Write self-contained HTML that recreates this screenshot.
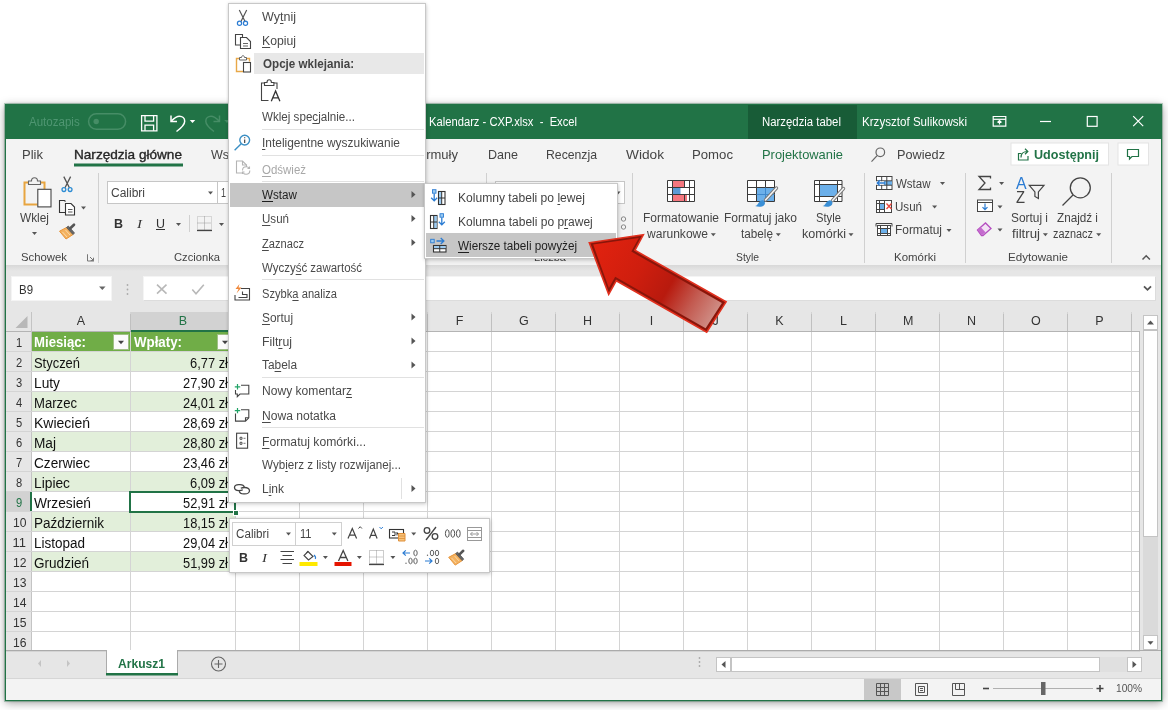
<!DOCTYPE html>
<html lang="pl"><head><meta charset="utf-8"><title>Kalendarz - CXP.xlsx - Excel</title>
<style>
*{box-sizing:border-box;margin:0;padding:0}
html,body{width:1168px;height:710px;overflow:hidden;background:#fff;font-family:"Liberation Sans",sans-serif}
.abs,.t,div,svg{position:absolute}
.t{white-space:nowrap;transform-origin:0 50%;display:inline-block}
.t u{text-decoration:underline;text-underline-offset:2px;text-decoration-thickness:1px}
#win{left:5px;top:104px;width:1157px;height:597px;background:#f3f3f3;border:1px solid #217346;box-shadow:0 0 0 1px rgba(33,115,70,.3),0 2px 9px rgba(0,0,0,.38),0 0 3px rgba(0,0,0,.2);overflow:hidden}
#root{will-change:transform;left:0;top:0;width:1168px;height:710px;overflow:hidden}
.sep{width:1px;background:#d2d2d2}
.wbox{background:#fff;border:1px solid #c6c6c6}
.menu{background:#fff;border:1px solid #c8c8c8;box-shadow:0 0 3px rgba(0,0,0,.13),1px 2px 4px rgba(0,0,0,.12)}
.msep{height:1px;background:#e1e1e1}
.gl{background:#d4d4d4}

</style></head>
<body>
<div id="root">
<div id="win"></div>
<div style="left:6px;top:105px;width:1155px;height:34px;background:#217346;"></div>
<div style="left:748px;top:105px;width:109px;height:34px;background:#185c37;"></div>
<div style="left:6px;top:139px;width:1155px;height:126px;background:#f3f3f3;"></div>
<div style="left:6px;top:265px;width:1155px;height:6px;background:linear-gradient(#d8d8d8,#e6e6e6);"></div>
<div style="left:6px;top:271px;width:1155px;height:41px;background:#e6e6e6;"></div>
<div style="left:11px;top:276px;width:101px;height:25px;background:#fff;border:1px solid #f4f4f4;"></div>
<div style="left:143px;top:276px;width:1013px;height:25px;background:#fff;border:1px solid #f4f4f4;border-bottom-color:#dcdcdc;border-right-color:#dcdcdc;"></div>
<div style="left:6px;top:312px;width:1155px;height:20px;background:#e6e6e6;"></div>
<div style="left:31px;top:332px;width:1109px;height:318px;background:#fff;"></div>
<div style="left:6px;top:332px;width:25px;height:318px;background:#e6e6e6;"></div>
<div style="left:1140px;top:312px;width:21px;height:338px;background:#e6e6e6;"></div>
<div style="left:6px;top:650px;width:1155px;height:28px;background:#e6e6e6;border-top:1px solid #ababab;"></div>
<div style="left:6px;top:678px;width:1155px;height:22px;background:#f3f3f3;border-top:1px solid #d6d6d6;"></div>
<div style="left:31px;top:332px;width:204px;height:20px;background:#70ad47;"></div>
<div style="left:31px;top:352px;width:204px;height:20px;background:#e2efda;"></div>
<div style="left:31px;top:392px;width:204px;height:20px;background:#e2efda;"></div>
<div style="left:31px;top:432px;width:204px;height:20px;background:#e2efda;"></div>
<div style="left:31px;top:472px;width:204px;height:20px;background:#e2efda;"></div>
<div style="left:31px;top:512px;width:204px;height:20px;background:#e2efda;"></div>
<div style="left:31px;top:552px;width:204px;height:20px;background:#e2efda;"></div>
<div style="left:31px;top:312px;width:1px;height:338px;background:#c4c4c4;"></div>
<div style="left:130px;top:312px;width:1px;height:338px;background:#d4d4d4;"></div>
<div style="left:235px;top:312px;width:1px;height:338px;background:#d4d4d4;"></div>
<div style="left:299px;top:312px;width:1px;height:338px;background:#d4d4d4;"></div>
<div style="left:363px;top:312px;width:1px;height:338px;background:#d4d4d4;"></div>
<div style="left:427px;top:312px;width:1px;height:338px;background:#d4d4d4;"></div>
<div style="left:491px;top:312px;width:1px;height:338px;background:#d4d4d4;"></div>
<div style="left:555px;top:312px;width:1px;height:338px;background:#d4d4d4;"></div>
<div style="left:619px;top:312px;width:1px;height:338px;background:#d4d4d4;"></div>
<div style="left:683px;top:312px;width:1px;height:338px;background:#d4d4d4;"></div>
<div style="left:747px;top:312px;width:1px;height:338px;background:#d4d4d4;"></div>
<div style="left:811px;top:312px;width:1px;height:338px;background:#d4d4d4;"></div>
<div style="left:875px;top:312px;width:1px;height:338px;background:#d4d4d4;"></div>
<div style="left:939px;top:312px;width:1px;height:338px;background:#d4d4d4;"></div>
<div style="left:1003px;top:312px;width:1px;height:338px;background:#d4d4d4;"></div>
<div style="left:1067px;top:312px;width:1px;height:338px;background:#d4d4d4;"></div>
<div style="left:1131px;top:312px;width:1px;height:338px;background:#d4d4d4;"></div>
<div style="left:130px;top:314px;width:1px;height:17px;background:#c0c0c0;"></div>
<div style="left:235px;top:314px;width:1px;height:17px;background:#c0c0c0;"></div>
<div style="left:299px;top:314px;width:1px;height:17px;background:#c0c0c0;"></div>
<div style="left:363px;top:314px;width:1px;height:17px;background:#c0c0c0;"></div>
<div style="left:427px;top:314px;width:1px;height:17px;background:#c0c0c0;"></div>
<div style="left:491px;top:314px;width:1px;height:17px;background:#c0c0c0;"></div>
<div style="left:555px;top:314px;width:1px;height:17px;background:#c0c0c0;"></div>
<div style="left:619px;top:314px;width:1px;height:17px;background:#c0c0c0;"></div>
<div style="left:683px;top:314px;width:1px;height:17px;background:#c0c0c0;"></div>
<div style="left:747px;top:314px;width:1px;height:17px;background:#c0c0c0;"></div>
<div style="left:811px;top:314px;width:1px;height:17px;background:#c0c0c0;"></div>
<div style="left:875px;top:314px;width:1px;height:17px;background:#c0c0c0;"></div>
<div style="left:939px;top:314px;width:1px;height:17px;background:#c0c0c0;"></div>
<div style="left:1003px;top:314px;width:1px;height:17px;background:#c0c0c0;"></div>
<div style="left:1067px;top:314px;width:1px;height:17px;background:#c0c0c0;"></div>
<div style="left:1131px;top:314px;width:1px;height:17px;background:#c0c0c0;"></div>
<div style="left:6px;top:331px;width:1134px;height:1px;background:#d4d4d4;"></div>
<div style="left:6px;top:351px;width:1134px;height:1px;background:#d4d4d4;"></div>
<div style="left:6px;top:371px;width:1134px;height:1px;background:#d4d4d4;"></div>
<div style="left:6px;top:391px;width:1134px;height:1px;background:#d4d4d4;"></div>
<div style="left:6px;top:411px;width:1134px;height:1px;background:#d4d4d4;"></div>
<div style="left:6px;top:431px;width:1134px;height:1px;background:#d4d4d4;"></div>
<div style="left:6px;top:451px;width:1134px;height:1px;background:#d4d4d4;"></div>
<div style="left:6px;top:471px;width:1134px;height:1px;background:#d4d4d4;"></div>
<div style="left:6px;top:491px;width:1134px;height:1px;background:#d4d4d4;"></div>
<div style="left:6px;top:511px;width:1134px;height:1px;background:#d4d4d4;"></div>
<div style="left:6px;top:531px;width:1134px;height:1px;background:#d4d4d4;"></div>
<div style="left:6px;top:551px;width:1134px;height:1px;background:#d4d4d4;"></div>
<div style="left:6px;top:571px;width:1134px;height:1px;background:#d4d4d4;"></div>
<div style="left:6px;top:591px;width:1134px;height:1px;background:#d4d4d4;"></div>
<div style="left:6px;top:611px;width:1134px;height:1px;background:#d4d4d4;"></div>
<div style="left:6px;top:631px;width:1134px;height:1px;background:#d4d4d4;"></div>
<div style="left:6px;top:651px;width:1134px;height:1px;background:#d4d4d4;"></div>
<div style="left:1139px;top:332px;width:1px;height:318px;background:#b8b8b8;"></div>
<div style="left:6px;top:331px;width:1134px;height:1px;background:#b4b4b4;"></div>
<div style="left:31px;top:312px;width:1px;height:20px;background:#c4c4c4;"></div>
<div style="left:131px;top:312px;width:104px;height:20px;background:#d2d2d2;border-bottom:2px solid #217346;"></div>
<div style="left:6px;top:492px;width:26px;height:19px;background:#d2d2d2;border-right:2px solid #217346;"></div>
<div style="left:129px;top:491px;width:107px;height:22px;background:transparent;border:2px solid #217346;"></div>
<div style="left:233px;top:510px;width:6px;height:6px;background:#217346;border:1px solid #fff;"></div>
<svg width="1168" height="710" viewBox="0 0 1168 710" style="left:0;top:0"><rect x="88.600" y="113.800" width="37" height="15.400" rx="7.700" fill="none" stroke="#468d66" stroke-width="1.500"/>
<circle cx="96.200" cy="121.500" r="2.700" fill="#468d66"/>
<g fill="none" stroke="#fff" stroke-width="1.3"><path d="M141.6 115.6h15.3v15.2h-15.3z"/><path d="M145 115.6v5.6h8.6v-5.6"/><path d="M145 130.8v-5.6h8.6v5.6"/></g>
<g fill="none" stroke="#fff" stroke-width="1.5"><path d="M176.5 131.5c4-3 8.2-6.5 8.2-10.3 0-3-2.4-4.9-5.2-4.9-3.2 0-5.6 2.2-8 4.6"/><path d="M171 115.6v5.9h6"/></g>
<path d="M189.75 120.0h5.5l-2.75 3z" fill="#fff"/>
<g fill="none" stroke="#468d66" stroke-width="1.500"><path d="M214 131.5c-4-3-8.2-6.500-8.2-10.300 0-3 2.400-4.900 5.200-4.900 3.200 0 5.600 2.200 8 4.600"/><path d="M219.5 115.600v5.900h-6"/></g>
<path d="M224.25 120.0h5.5l-2.75 3z" fill="#468d66"/>
<g fill="none" stroke="#fff" stroke-width="1.2"><path d="M993.200 116.500h12.600v9.600h-12.600z"/><path d="M993.200 119.300h12.600"/><path d="M999.500 124.500v-3.800m-2 1.800l2-2 2 2"/></g>
<path d="M1040 121.500h11" stroke="#fff" stroke-width="1.2"/>
<rect x="1087.300" y="116.500" width="9.800" height="9.800" fill="none" stroke="#fff" stroke-width="1.2"/>
<path d="M1133.200 116.200l10 10m0-10l-10 10" stroke="#fff" stroke-width="1.200" fill="none"/>
<rect x="74" y="163.500" width="109" height="3" fill="#217346"/>
<g fill="none" stroke="#666" stroke-width="1.200"><circle cx="880.300" cy="152.300" r="4.300"/><path d="M877.100 155.700l-5.600 6"/></g>
<rect x="1011" y="143" width="97.500" height="22" fill="#fff" stroke="#e4e4e4" stroke-width="1"/>
<g fill="none" stroke="#217346" stroke-width="1.200"><path d="M1021.500 153.500h-3v6.500h9.500v-4"/><path d="M1021 157.500c0-4 2.500-6 6.500-6m-2.500-2.700l2.800 2.700-2.800 2.700"/></g>
<rect x="1118" y="143" width="30.500" height="22" fill="#fff" stroke="#e4e4e4" stroke-width="1"/>
<path d="M1127.500 149.500h11v7h-6.500l-2.500 2.500v-2.500h-2z" fill="none" stroke="#217346" stroke-width="1.200"/>
<path d="M98.5 173v90" stroke="#d0d0d0" stroke-width="1"/>
<path d="M632.5 173v90" stroke="#d0d0d0" stroke-width="1"/>
<path d="M864.5 173v90" stroke="#d0d0d0" stroke-width="1"/>
<path d="M965.5 173v90" stroke="#d0d0d0" stroke-width="1"/>
<path d="M1111.5 173v90" stroke="#d0d0d0" stroke-width="1"/>
<path d="M189.500 215v17" stroke="#d0d0d0" stroke-width="1"/>
<path d="M486.500 173v12" stroke="#d0d0d0" stroke-width="1"/>
<g fill="none"><path d="M29 182.500h-4.500v22h13" stroke="#e8a540" stroke-width="2"/><path d="M40 182.500h4.500v6.500" stroke="#e8a540" stroke-width="2"/><path d="M28.500 184.500v-3.500h3c0-2 1.300-3.200 3-3.200s3 1.200 3 3.200h3v3.500z" stroke="#666" stroke-width="1.100" fill="#f3f3f3"/><rect x="37.800" y="189.300" width="13.200" height="17.600" fill="#fff" stroke="#444" stroke-width="1.100"/></g>
<path d="M32.0 232.0h5l-2.5 3z" fill="#555"/>
<g fill="none" stroke-width="1.300"><path d="M63.800 176.600l5.600 11.200m1.200-11.200l-5.600 11.200" stroke="#555"/><circle cx="63.900" cy="189.600" r="1.900" stroke="#2b8bd3"/><circle cx="70.100" cy="189.600" r="1.900" stroke="#2b8bd3"/></g>
<g stroke="#333" stroke-width="1.100"><path d="M65.500 212.500h-6v-12h5l1 1" fill="none"/><path d="M65.500 203.500h5.500l3.500 3.500v8h-9z" fill="#fff"/><path d="M68 209.500h4.500m-4.500 2.500h4.500" fill="none" stroke="#555"/></g>
<path d="M81.0 206.5h5l-2.5 3z" fill="#555"/>
<g transform="translate(0 0)"><path d="M59.500 231.200l7-3.700 6.500 7-7 4.500z" fill="#f3b15f" stroke="#e8953a" stroke-width="1" stroke-linejoin="round"/><path d="M62.500 232l4.500 5m-1.500-7l4.500 5" stroke="#fbd9a8" stroke-width="1" fill="none"/><path d="M66.500 227.500l1.800-1.500 6.200 7-1.500 1.500z" fill="#666" stroke="#555" stroke-width=".800" stroke-linejoin="round"/><path d="M70.300 228.300l3.700-3.600" stroke="#555" stroke-width="2.600" stroke-linecap="round"/></g>
<path d="M88 254.500h-0.500v6.500h6.500m-4-4l3.500 3.500m0-2.800v2.800h-2.800" fill="none" stroke="#777" stroke-width="1"/>
<rect x="107.500" y="181.500" width="110" height="22" fill="#fff" stroke="#c6c6c6"/>
<rect x="217.500" y="181.500" width="40" height="22" fill="#fff" stroke="#c6c6c6"/>
<path d="M208.0 191.5h5l-2.5 3z" fill="#555"/>
<path d="M176.0 223.0h5l-2.5 3z" fill="#555"/>
<path d="M219.0 223.0h5l-2.5 3z" fill="#555"/>
<g fill="none" stroke-width="1" stroke-dasharray="1 1"><path d="M197.500 216.500h14v13h-14z" stroke="#b8b8b8"/><path d="M204.500 216.500v13m-7-6.500h14" stroke="#999"/></g><path d="M197 230.500h15" stroke="#444" stroke-width="1.300"/>
<rect x="495.500" y="181.500" width="129" height="22" fill="#fff" stroke="#c6c6c6"/>
<path d="M615.5 191.5h5l-2.5 3z" fill="#555"/>
<g fill="none" stroke="#888" stroke-width="1"><circle cx="623.500" cy="219" r="2.200"/><circle cx="623.500" cy="227" r="2.200"/></g>
<g><rect x="667.500" y="180.500" width="27" height="21" fill="#fff"/><rect x="672.500" y="180.500" width="12" height="7" fill="#f4777f"/><rect x="672.500" y="187.500" width="8" height="7" fill="#5b9bd5"/><rect x="672.500" y="194.500" width="14.500" height="7" fill="#f4777f"/><path d="M667.500 180.500h27v21h-27zm0 7h27m-27 7h27M672.500 180.500v21m12-21v7m0 7v7m5-21v21" fill="none" stroke="#3a3a3a" stroke-width="1"/></g>
<path d="M710.8 233.3h5l-2.5 3z" fill="#555"/>
<g><rect x="747.500" y="180.500" width="27" height="21" fill="#fff"/><rect x="756.500" y="187.500" width="18" height="14" fill="#6cb0ea"/><path d="M747.500 180.500h27v21h-27zm0 7h27m-27 7h27M756.500 180.500v21m9-21v21" fill="none" stroke="#3a3a3a" stroke-width="1"/><path d="M756.500 194.500h18m-9-7v14" stroke="#3f88cc" stroke-width="1" fill="none"/><path d="M776.500 188l-11 12" stroke="#7a7a7a" stroke-width="3.400" stroke-linecap="round"/><path d="M776.500 188l-11 12" stroke="#f6f6f6" stroke-width="1.500" stroke-linecap="round"/><path d="M755 206c3 0 3.500-5.200 7.200-5.700 2.400.300 3.400 2.300 2.400 4.200-1.500 2.700-6.200 2.800-9.600 1.500z" fill="#3a8fd6"/></g>
<path d="M775.8 233.3h5l-2.5 3z" fill="#555"/>
<g><rect x="814.500" y="180.500" width="27.500" height="21" fill="#fff"/><rect x="819.500" y="184.500" width="18" height="12" fill="#6cb0ea"/><path d="M814.500 180.500h27.500v21h-27.500zm0 4h27.500m-27.500 12h27.500M819.500 180.500v21m18-21v21" fill="none" stroke="#3a3a3a" stroke-width="1"/><path d="M843.500 188.500l-11 12" stroke="#7a7a7a" stroke-width="3.400" stroke-linecap="round"/><path d="M843.500 188.500l-11 12" stroke="#f6f6f6" stroke-width="1.500" stroke-linecap="round"/><path d="M822.500 206c3 0 3.500-5.200 7.200-5.700 2.400.300 3.400 2.300 2.400 4.200-1.500 2.700-6.200 2.800-9.600 1.500z" fill="#3a8fd6"/></g>
<path d="M848.5 233.3h5l-2.5 3z" fill="#555"/>
<g><rect x="876.500" y="176.500" width="15.500" height="13" fill="#fff" stroke="#444"/><rect x="884" y="181" width="8" height="4.300" fill="#6cb0ea"/><path d="M876.500 180.800h15.500m-15.500 4.400h15.500m-10.300-8.700v13m5.100-13v13" fill="none" stroke="#444"/><rect x="875.500" y="181.300" width="8" height="3.500" fill="#fff"/><path d="M877.500 183h7.500m-5-2.700l-2.800 2.700 2.800 2.700" fill="none" stroke="#2b7cd3" stroke-width="1.300"/></g>
<path d="M940.0 182.0h5l-2.5 3z" fill="#555"/>
<g><rect x="876.500" y="200.500" width="15" height="12" fill="#fff" stroke="#444"/><rect x="879.500" y="203.500" width="5" height="6" fill="#6cb0ea"/><path d="M876.500 203.500h8m-8 6h8m-5-9v12m5-12v12" fill="none" stroke="#444"/><path d="M886.500 203.500l5 5.500m0-5.500l-5 5.500" stroke="#e8453c" stroke-width="1.300" fill="none"/></g>
<path d="M932.1 205.5h5l-2.5 3z" fill="#555"/>
<g><rect x="877.500" y="225.500" width="13" height="10" fill="#fff" stroke="#444"/><rect x="880.500" y="228.500" width="7" height="5" fill="#6cb0ea"/><path d="M877.500 228.500h13m-13 5h13m-10-8v10m7-10v10" fill="none" stroke="#444"/><path d="M876 223.500h16m-16 0v3m16-3v3" fill="none" stroke="#444"/></g>
<path d="M946.5 229.0h5l-2.5 3z" fill="#555"/>
<path d="M990.500 178.500v-2h-11.500l6 6.500-6 6.500h11.500v-2" fill="none" stroke="#444" stroke-width="1.300"/>
<path d="M999.1 182.0h5l-2.5 3z" fill="#555"/>
<g fill="none"><rect x="977.500" y="200" width="15" height="11.500" fill="#fff" stroke="#444"/><path d="M977.500 202.500h15" stroke="#444"/><path d="M985 203.500v6m-2.500-2.300l2.500 2.500 2.500-2.500" stroke="#2b7cd3" stroke-width="1.200"/></g>
<path d="M997.5 205.5h5l-2.5 3z" fill="#555"/>
<path d="M977.500 230l8-7 5.500 5.500-8 7h-1.500z" fill="#f3e3f5" stroke="#b54fc0" stroke-width="1.300"/><path d="M977.500 230l4.500 5.200 3.500-3-4.700-5z" fill="#c46bce"/>
<path d="M997.5 228.5h5l-2.5 3z" fill="#555"/>
<path d="M1029.300 185.300h14.700l-5.600 6.600v6.600l-3.500-2v-4.600z" fill="none" stroke="#444" stroke-width="1.200"/>
<path d="M1042.9 233.3h5l-2.5 3z" fill="#555"/>
<g fill="none" stroke="#444" stroke-width="1.300"><circle cx="1080.300" cy="187.800" r="10"/><path d="M1073 195l-10.500 10.500"/></g>
<path d="M1096.2 233.3h5l-2.5 3z" fill="#555"/>
<path d="M1142.500 259.500l3.700-3.700 3.700 3.700" fill="none" stroke="#555" stroke-width="1.500"/>
<path d="M99.05 286.55h6.5l-3.25 3.5z" fill="#666"/>
<g fill="#aaa"><circle cx="127.500" cy="285" r=".900"/><circle cx="127.500" cy="289.500" r=".900"/><circle cx="127.500" cy="294" r=".900"/></g>
<path d="M157 284.700l9.500 9m0-9l-9.500 9" stroke="#b8b8b8" stroke-width="1.600" fill="none"/>
<path d="M192.300 289.500l3.700 4.200 7.800-9" stroke="#b8b8b8" stroke-width="1.600" fill="none"/>
<path d="M1144 286.300l3.500 3.500 3.500-3.500" stroke="#555" stroke-width="1.800" fill="none"/>
<path d="M27.500 316v12h-12z" fill="#b8b8b8"/>
<rect x="113.500" y="334.500" width="15" height="15" fill="#fbfbfb" stroke="#9fbf86"/>
<path d="M118.0 340.75h6l-3.0 3.5z" fill="#444"/>
<rect x="217.500" y="334.500" width="15" height="15" fill="#fbfbfb" stroke="#9fbf86"/>
<path d="M222.0 340.75h6l-3.0 3.5z" fill="#444"/>
<rect x="1143.500" y="315.500" width="14" height="14" fill="#fff" stroke="#c4c4c4"/><path d="M1147 324.500l3.500-4 3.500 4z" fill="#555"/>
<rect x="1143" y="330" width="15" height="306" fill="#dadada"/>
<rect x="1143.500" y="330.500" width="14" height="206" fill="#fff" stroke="#c4c4c4"/>
<rect x="1143.500" y="635.500" width="14" height="14" fill="#fff" stroke="#c4c4c4"/><path d="M1147.5 641.25h6l-3.0 3.5z" fill="#555"/>
<g fill="#a8a8a8"><circle cx="699.500" cy="658" r=".900"/><circle cx="699.500" cy="662" r=".900"/><circle cx="699.500" cy="666" r=".900"/></g>
<rect x="716.500" y="657.500" width="14" height="14" fill="#fff" stroke="#c4c4c4"/><path d="M725.500 661l-4 3.500 4 3.500z" fill="#555"/>
<rect x="731" y="657" width="397" height="15" fill="#e0e0e0"/>
<rect x="731.500" y="657.500" width="368" height="14" fill="#fff" stroke="#c4c4c4"/>
<rect x="1127.500" y="657.500" width="14" height="14" fill="#fff" stroke="#c4c4c4"/><path d="M1132.500 661l4 3.500-4 3.500z" fill="#555"/>
<path d="M41 660l-3 3.500 3 3.500z" fill="#c4c4c4"/><path d="M67 660l3 3.500-3 3.500z" fill="#c4c4c4"/>
<rect x="106" y="650" width="72" height="25" fill="#fff"/><path d="M106.500 650v24m71-24v24" stroke="#ababab"/><rect x="106" y="673" width="72" height="2.500" fill="#217346"/>
<g fill="none" stroke="#666" stroke-width="1.100"><circle cx="218.500" cy="664" r="7"/><path d="M214.500 664h8m-4-4v8"/></g>
<rect x="864" y="679" width="37" height="21" fill="#c8c8c8"/>
<g fill="none" stroke="#555" stroke-width="1"><path d="M876.500 683.500h12v12h-12zm4 0v12m4-12v12m-8-8h12m-12 4h12"/></g>
<g fill="none" stroke="#555" stroke-width="1"><path d="M915.500 683.500h12v12h-12z"/><path d="M918.500 686.500h6v6h-6zm1.500 2h3m-3 2h3"/></g>
<g fill="none" stroke="#555" stroke-width="1"><path d="M952.500 683.500h12v12h-12z"/><path d="M955.500 683.500v6h9m-5-6v6"/></g>
<path d="M983 688.500h6" stroke="#444" stroke-width="1.600"/><path d="M993 688.500h100" stroke="#b0b0b0" stroke-width="1"/><rect x="1041" y="682" width="4.500" height="13" fill="#666"/><path d="M1096.500 688.500h7m-3.500-3.500v7" stroke="#444" stroke-width="1.600"/></svg>
<span class="t" id="t0" style="left:29.3px;top:114.2px;font-size:12px;line-height:16px;color:#4f9672;transform:scaleX(0.962);">Autozapis</span>
<span class="t" id="t1" style="left:429px;top:114.0px;font-size:12px;line-height:16px;color:#fff;transform:scaleX(0.934);">Kalendarz - CXP.xlsx&nbsp; -&nbsp; Excel</span>
<span class="t" id="t2" style="left:762px;top:114.0px;font-size:12px;line-height:16px;color:#fff;transform:scaleX(0.947);">Narzędzia tabel</span>
<span class="t" id="t3" style="left:862px;top:114.0px;font-size:12px;line-height:16px;color:#fff;transform:scaleX(0.966);">Krzysztof Sulikowski</span>
<span class="t" id="t4" style="left:22px;top:145.5px;font-size:13px;line-height:17px;color:#444;">Plik</span>
<span class="t" id="t5" style="left:74px;top:145.5px;font-size:13px;line-height:17px;color:#262626;transform:scaleX(1.045);-webkit-text-stroke:.35px #262626;">Narzędzia główne</span>
<span class="t" id="t6" style="left:211px;top:145.5px;font-size:13px;line-height:17px;color:#444;transform:scaleX(0.963);">Wstawianie</span>
<span class="t" id="t7" style="left:411px;top:145.5px;font-size:13px;line-height:17px;color:#444;">Formuły</span>
<span class="t" id="t8" style="left:488px;top:145.5px;font-size:13px;line-height:17px;color:#444;transform:scaleX(0.965);">Dane</span>
<span class="t" id="t9" style="left:546px;top:145.5px;font-size:13px;line-height:17px;color:#444;transform:scaleX(0.941);">Recenzja</span>
<span class="t" id="t10" style="left:626px;top:145.5px;font-size:13px;line-height:17px;color:#444;transform:scaleX(1.052);">Widok</span>
<span class="t" id="t11" style="left:692px;top:145.5px;font-size:13px;line-height:17px;color:#444;transform:scaleX(1.013);">Pomoc</span>
<span class="t" id="t12" style="left:762px;top:145.5px;font-size:13px;line-height:17px;color:#217346;transform:scaleX(0.992);">Projektowanie</span>
<span class="t" id="t13" style="left:897px;top:145.5px;font-size:13px;line-height:17px;color:#444;transform:scaleX(0.977);">Powiedz</span>
<span class="t" id="t14" style="left:1034px;top:145.5px;font-size:13px;line-height:17px;color:#217346;font-weight:bold;transform:scaleX(0.968);">Udostępnij</span>
<span class="t" id="t15" style="left:20px;top:210.0px;font-size:12px;line-height:16px;color:#444;transform:scaleX(0.988);">Wklej</span>
<span class="t" id="t16" style="left:21px;top:249.5px;font-size:11px;line-height:15px;color:#444;transform:scaleX(1.030);">Schowek</span>
<span class="t" id="t17" style="left:111px;top:184.8px;font-size:12px;line-height:16px;color:#444;">Calibri</span>
<span class="t" id="t18" style="left:221px;top:184.8px;font-size:12px;line-height:16px;color:#444;transform:scaleX(0.748);">1</span>
<span class="t" id="t19" style="left:114px;top:214.5px;font-size:13px;line-height:17px;color:#333;font-weight:bold;transform:scaleX(0.958);">B</span>
<span class="t" id="t20" style="left:137px;top:214.5px;font-size:13px;line-height:17px;color:#333;font-style:italic;transform:scaleX(1.151);font-family:&quot;Liberation Serif&quot;,serif;">I</span>
<span class="t" id="t21" style="left:156px;top:214.5px;font-size:13px;line-height:17px;color:#333;transform:scaleX(0.958);text-decoration:underline;">U</span>
<span class="t" id="t22" style="left:174px;top:249.5px;font-size:11px;line-height:15px;color:#444;transform:scaleX(1.017);">Czcionka</span>
<span class="t" id="t23" style="left:534px;top:249.5px;font-size:11px;line-height:15px;color:#444;transform:scaleX(1.006);">Liczba</span>
<span class="t" id="t24" style="left:643px;top:210.0px;font-size:12px;line-height:16px;color:#444;">Formatowanie</span>
<span class="t" id="t25" style="left:647px;top:226.0px;font-size:12px;line-height:16px;color:#444;transform:scaleX(1.005);">warunkowe</span>
<span class="t" id="t26" style="left:724px;top:210.0px;font-size:12px;line-height:16px;color:#444;transform:scaleX(1.004);">Formatuj jako</span>
<span class="t" id="t27" style="left:741px;top:226.0px;font-size:12px;line-height:16px;color:#444;transform:scaleX(0.978);">tabelę</span>
<span class="t" id="t28" style="left:816px;top:210.0px;font-size:12px;line-height:16px;color:#444;transform:scaleX(0.937);">Style</span>
<span class="t" id="t29" style="left:802px;top:226.0px;font-size:12px;line-height:16px;color:#444;transform:scaleX(1.047);">komórki</span>
<span class="t" id="t30" style="left:736px;top:249.5px;font-size:11px;line-height:15px;color:#444;transform:scaleX(0.940);">Style</span>
<span class="t" id="t31" style="left:895.5px;top:175.8px;font-size:12px;line-height:16px;color:#444;transform:scaleX(0.958);">Wstaw</span>
<span class="t" id="t32" style="left:895px;top:199.0px;font-size:12px;line-height:16px;color:#444;transform:scaleX(0.964);">Usuń</span>
<span class="t" id="t33" style="left:895px;top:222.0px;font-size:12px;line-height:16px;color:#444;transform:scaleX(0.993);">Formatuj</span>
<span class="t" id="t34" style="left:894px;top:249.5px;font-size:11px;line-height:15px;color:#444;transform:scaleX(1.041);">Komórki</span>
<span class="t" id="t35" style="left:1011px;top:210.0px;font-size:12px;line-height:16px;color:#444;transform:scaleX(0.990);">Sortuj i</span>
<span class="t" id="t36" style="left:1012px;top:226.0px;font-size:12px;line-height:16px;color:#444;transform:scaleX(1.105);">filtruj</span>
<span class="t" id="t37" style="left:1057px;top:210.0px;font-size:12px;line-height:16px;color:#444;transform:scaleX(0.975);">Znajdź i</span>
<span class="t" id="t38" style="left:1053px;top:226.0px;font-size:12px;line-height:16px;color:#444;transform:scaleX(0.908);">zaznacz</span>
<span class="t" id="t39" style="left:1008px;top:249.5px;font-size:11px;line-height:15px;color:#444;transform:scaleX(1.055);">Edytowanie</span>
<span class="t" id="t40" style="left:1016px;top:174.0px;font-size:16px;line-height:20px;color:#2b7cd3;transform:scaleX(0.993);">A</span>
<span class="t" id="t41" style="left:1016px;top:188.0px;font-size:16px;line-height:20px;color:#444;transform:scaleX(0.920);">Z</span>
<span class="t" id="t42" style="left:18.5px;top:281.0px;font-size:13px;line-height:17px;color:#333;transform:scaleX(0.880);">B9</span>
<span class="t" id="t43" style="left:76.5px;top:313.4px;font-size:12.5px;line-height:16.5px;color:#333;width:9px;text-align:center;">A</span>
<span class="t" id="t44" style="left:178.5px;top:313.4px;font-size:12.5px;line-height:16.5px;color:#217346;width:9px;text-align:center;">B</span>
<span class="t" id="t45" style="left:263.0px;top:313.4px;font-size:12.5px;line-height:16.5px;color:#333;width:9px;text-align:center;">C</span>
<span class="t" id="t46" style="left:327.0px;top:313.4px;font-size:12.5px;line-height:16.5px;color:#333;width:9px;text-align:center;">D</span>
<span class="t" id="t47" style="left:391.0px;top:313.4px;font-size:12.5px;line-height:16.5px;color:#333;width:9px;text-align:center;">E</span>
<span class="t" id="t48" style="left:455.0px;top:313.4px;font-size:12.5px;line-height:16.5px;color:#333;width:9px;text-align:center;">F</span>
<span class="t" id="t49" style="left:519.0px;top:313.4px;font-size:12.5px;line-height:16.5px;color:#333;width:9px;text-align:center;">G</span>
<span class="t" id="t50" style="left:583.0px;top:313.4px;font-size:12.5px;line-height:16.5px;color:#333;width:9px;text-align:center;">H</span>
<span class="t" id="t51" style="left:647.0px;top:313.4px;font-size:12.5px;line-height:16.5px;color:#333;width:9px;text-align:center;">I</span>
<span class="t" id="t52" style="left:711.0px;top:313.4px;font-size:12.5px;line-height:16.5px;color:#333;width:9px;text-align:center;">J</span>
<span class="t" id="t53" style="left:775.0px;top:313.4px;font-size:12.5px;line-height:16.5px;color:#333;width:9px;text-align:center;">K</span>
<span class="t" id="t54" style="left:839.0px;top:313.4px;font-size:12.5px;line-height:16.5px;color:#333;width:9px;text-align:center;">L</span>
<span class="t" id="t55" style="left:903.0px;top:313.4px;font-size:12.5px;line-height:16.5px;color:#333;width:9px;text-align:center;">M</span>
<span class="t" id="t56" style="left:967.0px;top:313.4px;font-size:12.5px;line-height:16.5px;color:#333;width:9px;text-align:center;">N</span>
<span class="t" id="t57" style="left:1031.0px;top:313.4px;font-size:12.5px;line-height:16.5px;color:#333;width:9px;text-align:center;">O</span>
<span class="t" id="t58" style="left:1095.0px;top:313.4px;font-size:12.5px;line-height:16.5px;color:#333;width:9px;text-align:center;">P</span>
<span class="t" id="t59" style="left:15.5px;top:333.8px;font-size:13px;line-height:17px;color:#333;transform:scaleX(0.857);">1</span>
<span class="t" id="t60" style="left:15.5px;top:353.8px;font-size:13px;line-height:17px;color:#333;transform:scaleX(0.857);">2</span>
<span class="t" id="t61" style="left:15.5px;top:373.8px;font-size:13px;line-height:17px;color:#333;transform:scaleX(0.857);">3</span>
<span class="t" id="t62" style="left:15.5px;top:393.8px;font-size:13px;line-height:17px;color:#333;transform:scaleX(0.857);">4</span>
<span class="t" id="t63" style="left:15.5px;top:413.8px;font-size:13px;line-height:17px;color:#333;transform:scaleX(0.857);">5</span>
<span class="t" id="t64" style="left:15.5px;top:433.8px;font-size:13px;line-height:17px;color:#333;transform:scaleX(0.857);">6</span>
<span class="t" id="t65" style="left:15.5px;top:453.8px;font-size:13px;line-height:17px;color:#333;transform:scaleX(0.857);">7</span>
<span class="t" id="t66" style="left:15.5px;top:473.8px;font-size:13px;line-height:17px;color:#333;transform:scaleX(0.857);">8</span>
<span class="t" id="t67" style="left:15.5px;top:493.8px;font-size:13px;line-height:17px;color:#217346;transform:scaleX(0.857);">9</span>
<span class="t" id="t68" style="left:12.5px;top:513.8px;font-size:13px;line-height:17px;color:#333;transform:scaleX(0.933);">10</span>
<span class="t" id="t69" style="left:12.5px;top:533.8px;font-size:13px;line-height:17px;color:#333;">11</span>
<span class="t" id="t70" style="left:12.5px;top:553.8px;font-size:13px;line-height:17px;color:#333;transform:scaleX(0.933);">12</span>
<span class="t" id="t71" style="left:12.5px;top:573.8px;font-size:13px;line-height:17px;color:#333;transform:scaleX(0.933);">13</span>
<span class="t" id="t72" style="left:12.5px;top:593.8px;font-size:13px;line-height:17px;color:#333;transform:scaleX(0.933);">14</span>
<span class="t" id="t73" style="left:12.5px;top:613.8px;font-size:13px;line-height:17px;color:#333;transform:scaleX(0.933);">15</span>
<span class="t" id="t74" style="left:12.5px;top:633.8px;font-size:13px;line-height:17px;color:#333;transform:scaleX(0.933);">16</span>
<span class="t" id="t75" style="left:34px;top:333.0px;font-size:14px;line-height:18px;color:#fff;font-weight:bold;transform:scaleX(0.941);">Miesiąc:</span>
<span class="t" id="t76" style="left:134px;top:333.0px;font-size:14px;line-height:18px;color:#fff;font-weight:bold;transform:scaleX(0.949);">Wpłaty:</span>
<span class="t" id="t77" style="left:34px;top:353.5px;font-size:14px;line-height:18px;color:#111;transform:scaleX(0.923);">Styczeń</span>
<span class="t" id="t78" style="left:190px;top:353.5px;font-size:14px;line-height:18px;color:#111;transform:scaleX(0.921);">6,77 zł</span>
<span class="t" id="t79" style="left:34px;top:373.5px;font-size:14px;line-height:18px;color:#111;transform:scaleX(0.982);">Luty</span>
<span class="t" id="t80" style="left:183px;top:373.5px;font-size:14px;line-height:18px;color:#111;transform:scaleX(0.917);">27,90 zł</span>
<span class="t" id="t81" style="left:34px;top:393.5px;font-size:14px;line-height:18px;color:#111;transform:scaleX(0.937);">Marzec</span>
<span class="t" id="t82" style="left:183px;top:393.5px;font-size:14px;line-height:18px;color:#111;transform:scaleX(0.917);">24,01 zł</span>
<span class="t" id="t83" style="left:34px;top:413.5px;font-size:14px;line-height:18px;color:#111;">Kwiecień</span>
<span class="t" id="t84" style="left:183px;top:413.5px;font-size:14px;line-height:18px;color:#111;transform:scaleX(0.917);">28,69 zł</span>
<span class="t" id="t85" style="left:34px;top:433.5px;font-size:14px;line-height:18px;color:#111;transform:scaleX(0.975);">Maj</span>
<span class="t" id="t86" style="left:183px;top:433.5px;font-size:14px;line-height:18px;color:#111;transform:scaleX(0.917);">28,80 zł</span>
<span class="t" id="t87" style="left:34px;top:453.5px;font-size:14px;line-height:18px;color:#111;transform:scaleX(0.973);">Czerwiec</span>
<span class="t" id="t88" style="left:183px;top:453.5px;font-size:14px;line-height:18px;color:#111;transform:scaleX(0.917);">23,46 zł</span>
<span class="t" id="t89" style="left:34px;top:473.5px;font-size:14px;line-height:18px;color:#111;transform:scaleX(0.984);">Lipiec</span>
<span class="t" id="t90" style="left:190px;top:473.5px;font-size:14px;line-height:18px;color:#111;transform:scaleX(0.921);">6,09 zł</span>
<span class="t" id="t91" style="left:34px;top:493.5px;font-size:14px;line-height:18px;color:#111;transform:scaleX(0.981);">Wrzesień</span>
<span class="t" id="t92" style="left:183px;top:493.5px;font-size:14px;line-height:18px;color:#111;transform:scaleX(0.917);">52,91 zł</span>
<span class="t" id="t93" style="left:34px;top:513.5px;font-size:14px;line-height:18px;color:#111;transform:scaleX(0.967);">Październik</span>
<span class="t" id="t94" style="left:183px;top:513.5px;font-size:14px;line-height:18px;color:#111;transform:scaleX(0.917);">18,15 zł</span>
<span class="t" id="t95" style="left:34px;top:533.5px;font-size:14px;line-height:18px;color:#111;transform:scaleX(0.963);">Listopad</span>
<span class="t" id="t96" style="left:183px;top:533.5px;font-size:14px;line-height:18px;color:#111;transform:scaleX(0.917);">29,04 zł</span>
<span class="t" id="t97" style="left:34px;top:553.5px;font-size:14px;line-height:18px;color:#111;transform:scaleX(0.968);">Grudzień</span>
<span class="t" id="t98" style="left:183px;top:553.5px;font-size:14px;line-height:18px;color:#111;transform:scaleX(0.917);">51,99 zł</span>
<span class="t" id="t99" style="left:118px;top:654.5px;font-size:13px;line-height:17px;color:#217346;font-weight:bold;transform:scaleX(0.929);">Arkusz1</span>
<span class="t" id="t100" style="left:1116.2px;top:680.7px;font-size:11px;line-height:15px;color:#555;transform:scaleX(0.927);">100%</span>
<div class="menu" style="left:228px;top:3px;width:198px;height:500px"></div>
<div style="left:254px;top:53px;width:170px;height:21px;background:#e8e8e8;"></div>
<div style="left:230px;top:183px;width:194px;height:24px;background:#c6c6c6;"></div>
<div style="left:262px;top:129px;width:162px;height:1px;background:#e1e1e1;"></div>
<div style="left:262px;top:155px;width:162px;height:1px;background:#e1e1e1;"></div>
<div style="left:262px;top:181px;width:162px;height:1px;background:#e1e1e1;"></div>
<div style="left:262px;top:279px;width:162px;height:1px;background:#e1e1e1;"></div>
<div style="left:262px;top:377px;width:162px;height:1px;background:#e1e1e1;"></div>
<div style="left:262px;top:427px;width:162px;height:1px;background:#e1e1e1;"></div>
<div style="left:401px;top:478px;width:1px;height:21px;background:#e1e1e1;"></div>
<div class="menu" style="left:424px;top:183px;width:194px;height:76px"></div>
<div style="left:426px;top:233px;width:190px;height:24px;background:#c6c6c6;"></div>
<div class="menu" style="left:229px;top:518px;width:261px;height:55px"></div>
<svg width="1168" height="710" viewBox="0 0 1168 710" style="left:0;top:0"><path d="M411.5 191.0l4 3.500-4 3.500z" fill="#555"/>
<path d="M411.5 215.0l4 3.500-4 3.500z" fill="#555"/>
<path d="M411.5 239.0l4 3.500-4 3.500z" fill="#555"/>
<path d="M411.5 313.5l4 3.500-4 3.500z" fill="#555"/>
<path d="M411.5 337.5l4 3.500-4 3.500z" fill="#555"/>
<path d="M411.5 361.5l4 3.500-4 3.500z" fill="#555"/>
<path d="M411.5 485.0l4 3.500-4 3.500z" fill="#555"/>
<g fill="none" stroke-width="1.200"><path d="M239.300 10l6 12m1.400-12l-6 12" stroke="#555"/><circle cx="239.500" cy="23.300" r="2.100" stroke="#2b7cd3"/><circle cx="245.500" cy="23.300" r="2.100" stroke="#2b7cd3"/></g>
<g stroke="#444" stroke-width="1.100"><path d="M235.500 34.500h7v10.500h-7z" fill="#fff"/><path d="M240.500 37.500h6l4 4v7h-10z" fill="#fff"/><path d="M243 43.500h5m-5 2.500h5" fill="none" stroke="#666"/></g>
<g fill="none"><path d="M239.500 58.500h-3v13h6.500" stroke="#e8a848" stroke-width="1.400"/><path d="M246.500 58.500h3v3" stroke="#e8a848" stroke-width="1.400"/><path d="M239.500 60v-2.500h2c0-1.200.700-1.800 1.500-1.800s1.500.600 1.500 1.800h2v2.500z" stroke="#666" stroke-width="1" fill="#fff"/><rect x="243.500" y="62.500" width="7" height="9.500" fill="#fff" stroke="#444" stroke-width="1.100"/></g>
<g fill="none" stroke="#444" stroke-width="1.100"><path d="M268.500 100.500h-7v-17.500h3"/><path d="M273.500 83h3.500v6"/><path d="M264.500 85.500v-3h2.500c0-1.800 1-2.700 2.200-2.700s2.200.900 2.200 2.700h2.500v3z" fill="#fff"/></g>
<path d="M271.300 101.300l4.300-10.300 4.300 10.300m-7-3.500h5.400" fill="none" stroke="#333" stroke-width="1.300"/>
<g fill="none" stroke="#3b8fc4" stroke-width="1.400"><circle cx="244.700" cy="140.100" r="4.900"/><path d="M241.200 143.700l-6.600 6.600"/></g><path d="M244.700 139.500v3.400m0-5.600v1" stroke="#333" stroke-width="1.100" fill="none"/>
<g fill="none" stroke="#b4b4b4" stroke-width="1.100"><path d="M243 173h-6.500v-12h6l4 4v2"/><path d="M242.500 161v4h4"/><path d="M242.500 170.500c0-2.500 1.800-3.800 3.700-3.800 1.300 0 2.400.600 3 1.600m.600 2.200c0 2.500-1.800 3.800-3.700 3.800-1.300 0-2.400-.600-3-1.600"/><path d="M249.500 166.500v2h-2m-5 5.500v-2h2"/></g>
<g fill="none" stroke="#444" stroke-width="1.100"><path d="M241 288.500h8.500v11.500h-14.500v-5"/><path d="M238.500 297.500h8.500v-3h-4.500v-3"/></g><path d="M239.500 284l-4 5h3l-2 4.500 5-6h-3z" fill="#f0883a"/>
<g fill="none" stroke="#444" stroke-width="1.100"><path d="M241 385.300h7.800v8.700h-8.800l-2.700 2.700v-2.700h-1.800v-4"/></g><path d="M234.800 386.800h5.400m-2.700-2.700v5.400" stroke="#21a366" stroke-width="1.200" fill="none"/>
<g fill="none" stroke="#444" stroke-width="1.100"><path d="M241 409.800h7.800v8l-3.300 3.300h-10v-7.600"/><path d="M248.800 417.800h-3.300v3.300"/></g><path d="M234.800 410.600h5.400m-2.700-2.700v5.400" stroke="#21a366" stroke-width="1.200" fill="none"/>
<g fill="none" stroke="#444" stroke-width="1.100"><rect x="236.600" y="433.200" width="11" height="15"/><path d="M240 437.300h2v2h-2zm0 5h2v2h-2z" stroke-width=".900"/><path d="M243.500 438.300h2m-2 5h2" stroke="#666" stroke-width=".900"/></g>
<g fill="none" stroke="#444" stroke-width="1.300"><path d="M242.800 489.800c-1 .600-2.300.800-4 .800-2.500 0-4.300-1.300-4.300-3s1.800-3 4.300-3h1.200c2.200 0 4 1.100 4.300 2.600"/><path d="M240.800 488.300c1-.600 2.300-.800 4-.800 2.500 0 4.700 1.300 4.700 3.200s-2.200 3.200-4.700 3.200h-1.200c-2.200 0-4-1.200-4.300-2.800"/></g>
<g><rect x="438.500" y="191.500" width="6.500" height="13" fill="#fff" stroke="#333" stroke-width="1.100"/><rect x="439" y="192" width="2.700" height="12" fill="#9ccbf1"/><path d="M441.700 191.500v13m-3.200-6.500h6.500" stroke="#333" stroke-width="1" fill="none"/><path d="M434.200 193.500v7m-3-2.800l3 3.200 3-3.200" stroke="#2b7cd3" stroke-width="1.300" fill="none"/><rect x="432.500" y="189.700" width="3.500" height="3.500" fill="#9ccbf1" stroke="#2b7cd3" stroke-width=".900"/></g>
<g><rect x="430.500" y="215.500" width="6.500" height="13" fill="#fff" stroke="#333" stroke-width="1.100"/><rect x="434" y="216" width="2.700" height="12" fill="#9ccbf1"/><path d="M433.700 215.500v13m-3.200-6.500h6.500" stroke="#333" stroke-width="1" fill="none"/><path d="M441.800 217.500v7m-3-2.800l3 3.200 3-3.200" stroke="#2b7cd3" stroke-width="1.300" fill="none"/><rect x="440" y="213.700" width="3.500" height="3.500" fill="#9ccbf1" stroke="#2b7cd3" stroke-width=".900"/></g>
<g><rect x="433.500" y="245.500" width="12.500" height="6.500" fill="#fff" stroke="#333" stroke-width="1.100"/><rect x="434" y="246" width="11.500" height="2.700" fill="#9ccbf1"/><path d="M433.500 248.700h12.500m-6.250-3.200v6.500" stroke="#333" stroke-width="1" fill="none"/><rect x="430.700" y="239.300" width="3.500" height="3.500" fill="#9ccbf1" stroke="#2b7cd3" stroke-width=".900"/><path d="M436.500 241h7m-2.800-3l3.200 3-3.200 3" stroke="#2b7cd3" stroke-width="1.300" fill="none"/></g>
<rect x="232.500" y="522.500" width="63" height="23" fill="#fff" stroke="#d0d0d0"/><rect x="295.500" y="522.500" width="46" height="23" fill="#fff" stroke="#d0d0d0"/>
<path d="M286.0 532.5h5l-2.5 3z" fill="#555"/>
<path d="M331.8 532.5h5l-2.5 3z" fill="#555"/>
<path d="M348 538.500l4.300-10 4.300 10m-7-3.300h5.400" fill="none" stroke="#444" stroke-width="1.200"/><path d="M358.500 528.500l1.700-1.800 1.700 1.800" fill="none" stroke="#444" stroke-width="1"/>
<path d="M369.500 538.500l3.800-9.500 3.800 9.500m-6.200-3.200h4.800" fill="none" stroke="#444" stroke-width="1.200"/><path d="M379.500 527l1.700 1.800 1.700-1.800" fill="none" stroke="#2b7cd3" stroke-width="1"/>
<g><rect x="389.500" y="529.500" width="14" height="8.500" fill="#fff" stroke="#333" stroke-width="1.100"/><path d="M392 532h3v3.500h-3m5-3.500v3.500m0-2h2" fill="none" stroke="#333" stroke-width="1"/><path d="M398.500 533.500h6.500v7.500h-6.500z" fill="#f6c27a" stroke="#e0903a" stroke-width="1"/><path d="M398.500 536h6.500m-6.500 2.500h6.500" stroke="#e0903a" stroke-width=".800"/></g>
<path d="M411.2 532.5h5l-2.5 3z" fill="#555"/>
<g fill="none" stroke="#444" stroke-width="1.300"><circle cx="427" cy="530.500" r="2.800"/><circle cx="435" cy="536.500" r="2.800"/><path d="M436 527l-10 13"/></g>
<g fill="none" stroke="#555" stroke-width="1"><ellipse cx="447.300" cy="533.500" rx="1.900" ry="3.800"/><ellipse cx="452.800" cy="533.500" rx="1.900" ry="3.800"/><ellipse cx="458.300" cy="533.500" rx="1.900" ry="3.800"/></g>
<g fill="none" stroke="#999" stroke-width="1"><rect x="467.500" y="527.500" width="14" height="13"/><path d="M467.500 530.500h14m-14 7h14"/><path d="M470.500 534h8m-6-2l-2 2 2 2m4-4l2 2-2 2"/></g>
<path d="M280.500 551.500h13.500m-11.500 4h9.500m-11.500 4h13.500m-11.500 4h9.500" stroke="#444" stroke-width="1.200" fill="none"/>
<g fill="none" stroke="#444" stroke-width="1.100"><path d="M308 551.500l5 5-4.500 3.500-4.500-4.500z"/><path d="M306.500 553l1.500-2"/><path d="M314 555c1.500 1.500 2 3 1.200 4" stroke="#2b7cd3"/></g><rect x="299.500" y="562" width="18" height="4" fill="#ffe900"/>
<path d="M322.9 556.0h5l-2.5 3z" fill="#555"/>
<path d="M338.500 561l4.700-10.500 4.700 10.500m-7.700-3.500h6" fill="none" stroke="#444" stroke-width="1.300"/><rect x="334.500" y="562" width="17" height="4" fill="#e51400"/>
<path d="M356.9 556.0h5l-2.5 3z" fill="#555"/>
<g fill="none" stroke="#999" stroke-width="1" stroke-dasharray="1 1"><path d="M369.500 550.500h14v13h-14z"/><path d="M376.500 550.500v13m-7-6.500h14"/></g><path d="M369 564.500h15" stroke="#444" stroke-width="1.300"/>
<path d="M390.4 556.0h5l-2.5 3z" fill="#555"/>
<path d="M403 553h7m-4.200-2.600l-2.800 2.600 2.800 2.600" fill="none" stroke="#2b7cd3" stroke-width="1.200"/><ellipse cx="415.5" cy="553" rx="1.700" ry="2.800" fill="none" stroke="#666" stroke-width="1"/><circle cx="406" cy="563.300" r=".700" fill="#666"/><ellipse cx="410.5" cy="561" rx="1.700" ry="2.800" fill="none" stroke="#666" stroke-width="1"/><ellipse cx="415.5" cy="561" rx="1.700" ry="2.800" fill="none" stroke="#666" stroke-width="1"/>
<circle cx="427.500" cy="555.300" r=".700" fill="#666"/><ellipse cx="432" cy="553" rx="1.700" ry="2.800" fill="none" stroke="#666" stroke-width="1"/><ellipse cx="437" cy="553" rx="1.700" ry="2.800" fill="none" stroke="#666" stroke-width="1"/><path d="M425 561h7m-2.800-2.600l2.800 2.600-2.800 2.600" fill="none" stroke="#2b7cd3" stroke-width="1.200"/><ellipse cx="437" cy="561" rx="1.700" ry="2.800" fill="none" stroke="#666" stroke-width="1"/>
<g transform="translate(389.2 326.1)"><path d="M59.500 231.200l7-3.700 6.500 7-7 4.500z" fill="#f3b15f" stroke="#e8953a" stroke-width="1" stroke-linejoin="round"/><path d="M62.500 232l4.500 5m-1.500-7l4.500 5" stroke="#fbd9a8" stroke-width="1" fill="none"/><path d="M66.500 227.500l1.800-1.500 6.200 7-1.500 1.500z" fill="#666" stroke="#555" stroke-width=".800" stroke-linejoin="round"/><path d="M70.300 228.300l3.700-3.600" stroke="#555" stroke-width="2.600" stroke-linecap="round"/></g></svg>
<span class="t" id="t101" style="left:262px;top:9.3px;font-size:12px;line-height:16px;color:#4a4a4a;transform:scaleX(1.043);">Wy<u>t</u>nij</span>
<span class="t" id="t102" style="left:262px;top:33.3px;font-size:12px;line-height:16px;color:#4a4a4a;transform:scaleX(1.019);"><u>K</u>opiuj</span>
<span class="t" id="t103" style="left:262px;top:108.5px;font-size:12px;line-height:16px;color:#4a4a4a;transform:scaleX(0.968);">Wklej spe<u>c</u>jalnie...</span>
<span class="t" id="t104" style="left:262px;top:135.4px;font-size:12px;line-height:16px;color:#4a4a4a;transform:scaleX(0.994);"><u>I</u>nteligentne wyszukiwanie</span>
<span class="t" id="t105" style="left:262px;top:187.3px;font-size:12px;line-height:16px;color:#1e1e1e;transform:scaleX(0.972);"><u>W</u>staw</span>
<span class="t" id="t106" style="left:262px;top:211.3px;font-size:12px;line-height:16px;color:#4a4a4a;transform:scaleX(0.963);"><u>U</u>suń</span>
<span class="t" id="t107" style="left:262px;top:235.9px;font-size:12px;line-height:16px;color:#4a4a4a;transform:scaleX(0.926);"><u>Z</u>aznacz</span>
<span class="t" id="t108" style="left:262px;top:259.9px;font-size:12px;line-height:16px;color:#4a4a4a;transform:scaleX(0.956);">Wyczy<u>ś</u>ć zawartość</span>
<span class="t" id="t109" style="left:262px;top:285.9px;font-size:12px;line-height:16px;color:#4a4a4a;transform:scaleX(0.929);">Szybk<u>a</u> analiza</span>
<span class="t" id="t110" style="left:262px;top:309.8px;font-size:12px;line-height:16px;color:#4a4a4a;transform:scaleX(0.989);"><u>S</u>ortuj</span>
<span class="t" id="t111" style="left:262px;top:333.8px;font-size:12px;line-height:16px;color:#4a4a4a;transform:scaleX(1.022);">Filt<u>r</u>uj</span>
<span class="t" id="t112" style="left:262px;top:357.4px;font-size:12px;line-height:16px;color:#4a4a4a;transform:scaleX(0.989);">Ta<u>b</u>ela</span>
<span class="t" id="t113" style="left:262px;top:383.3px;font-size:12px;line-height:16px;color:#4a4a4a;transform:scaleX(1.007);">Nowy komentar<u>z</u></span>
<span class="t" id="t114" style="left:262px;top:407.5px;font-size:12px;line-height:16px;color:#4a4a4a;transform:scaleX(1.008);"><u>N</u>owa notatka</span>
<span class="t" id="t115" style="left:262px;top:433.5px;font-size:12px;line-height:16px;color:#4a4a4a;transform:scaleX(1.013);"><u>F</u>ormatuj komórki...</span>
<span class="t" id="t116" style="left:262px;top:457.3px;font-size:12px;line-height:16px;color:#4a4a4a;transform:scaleX(0.970);">Wyb<u>i</u>erz z listy rozwijanej...</span>
<span class="t" id="t117" style="left:262px;top:480.9px;font-size:12px;line-height:16px;color:#4a4a4a;">L<u>i</u>nk</span>
<span class="t" id="t118" style="left:262px;top:161.6px;font-size:12px;line-height:16px;color:#a8a8a8;transform:scaleX(0.956);"><u>O</u>dśwież</span>
<span class="t" id="t119" style="left:263px;top:56.2px;font-size:12px;line-height:16px;color:#444;font-weight:bold;transform:scaleX(0.968);">Opcje wklejania:</span>
<span class="t" id="t120" style="left:458px;top:189.5px;font-size:12px;line-height:16px;color:#444;transform:scaleX(1.007);">Kolumny tabeli po <u>l</u>ewej</span>
<span class="t" id="t121" style="left:458px;top:213.5px;font-size:12px;line-height:16px;color:#444;">Kolumna tabeli po p<u>r</u>awej</span>
<span class="t" id="t122" style="left:458px;top:237.5px;font-size:12px;line-height:16px;color:#1e1e1e;transform:scaleX(0.975);"><u>W</u>iersze tabeli powyżej</span>
<span class="t" id="t123" style="left:235.5px;top:525.5px;font-size:12px;line-height:16px;color:#444;transform:scaleX(0.970);">Calibri</span>
<span class="t" id="t124" style="left:299.5px;top:525.5px;font-size:12px;line-height:16px;color:#444;transform:scaleX(0.922);">11</span>
<span class="t" id="t125" style="left:239px;top:548.5px;font-size:13px;line-height:17px;color:#333;font-weight:bold;transform:scaleX(0.958);">B</span>
<span class="t" id="t126" style="left:262px;top:548.5px;font-size:13px;line-height:17px;color:#333;font-style:italic;transform:scaleX(1.151);font-family:&quot;Liberation Serif&quot;,serif;">I</span>
<svg width="1168" height="710" viewBox="0 0 1168 710" style="left:0;top:0">
<defs><linearGradient id="ag" gradientUnits="userSpaceOnUse" x1="596" y1="247" x2="716" y2="317">
<stop offset="0" stop-color="#e0220f"/><stop offset=".35" stop-color="#cf1e0e"/><stop offset=".6" stop-color="#b81a0e"/><stop offset=".8" stop-color="#c35a50"/><stop offset="1" stop-color="#d09088"/></linearGradient></defs>
<polygon points="589.300,242.700 643.300,234.800 634.900,250.300 726.100,301.900 706.700,332.300 616.300,280.700 608.700,294.300" fill="#8a150a" stroke="#e2301e" stroke-width="1.600" stroke-linejoin="miter"/>
<polygon points="593.200,244.600 638.800,237.900 631.300,251.600 721.900,302.900 705.600,328.300 615.200,276.700 608.900,288" fill="url(#ag)"/>
</svg>
</div>
</body></html>
